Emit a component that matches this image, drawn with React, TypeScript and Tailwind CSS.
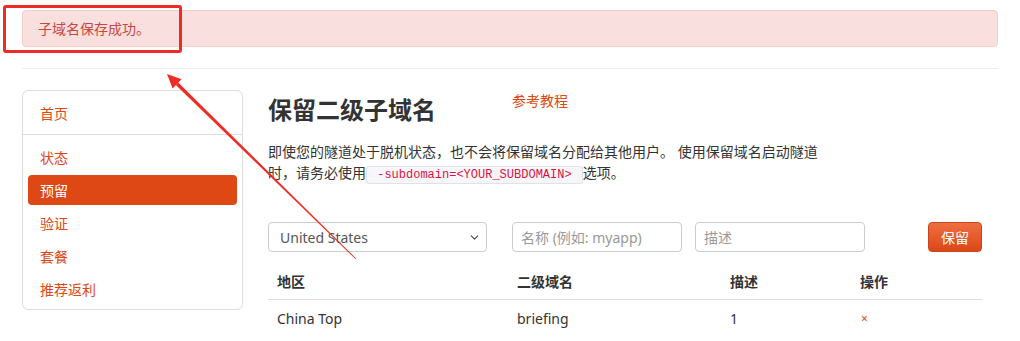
import React from "react";
import { ChevronDown } from "lucide-react";

const font = { fontFamily: '"Noto Sans", "Noto Sans CJK SC", sans-serif' };

function Sidebar() {
  const items = ["状态", "预留", "验证", "套餐", "推荐返利"];
  return (
    <div className="w-[221px] shrink-0 self-start rounded-[6px] border border-[#dddddd] pt-[7px] pb-[5px]">
      <div className="px-[5px]">
        <div className="flex h-[30px] items-center pl-[12px] text-[14px] text-[#dd4814]">首页</div>
      </div>
      <div className="mt-[6px] mb-[7px] h-px bg-[#dddddd]" />
      <div className="flex flex-col gap-[3px] px-[5px]">
        {items.map((t) => (
          <div
            key={t}
            className={
              t === "预留"
                ? "flex h-[30px] items-center rounded-[4px] bg-[#dd4814] pl-[12px] text-[14px] text-white"
                : "flex h-[30px] items-center pl-[12px] text-[14px] text-[#dd4814]"
            }
          >
            {t}
          </div>
        ))}
      </div>
    </div>
  );
}

function Main() {
  return (
    <div className="flex w-[714px] flex-col">
      <div className="flex items-start">
        <h1 className="w-[244px] text-[24px] font-bold leading-[40px] text-[#333333]">保留二级子域名</h1>
        <a className="mt-[1px] text-[14px] leading-[20px] text-[#dd4814]">参考教程</a>
      </div>
      <p className="mt-[11px] w-[556px] text-[14px] leading-[21px] text-[#333333]">
        即使您的隧道处于脱机状态，也不会将保留域名分配给其他用户。 使用保留域名启动隧道时，请务必使用
        <code
          className="rounded-[3px] border border-[#e1e1e8] bg-[#f7f7f9] px-[3px] py-[1px] text-[12px] text-[#dd1144] whitespace-pre"
          style={{ fontFamily: '"Liberation Mono", monospace' }}
        >
          {" -subdomain=<YOUR_SUBDOMAIN> "}
        </code>
        选项。
      </p>
      <div className="mt-[36px] flex h-[30px] items-stretch">
        <div className="flex w-[219px] items-center justify-between rounded-[4px] border border-[#cccccc] bg-white pl-[11px] pr-[5px] text-[14px] text-[#555555]">
          <span>United States</span>
          <ChevronDown size={13} strokeWidth={2} color="#444" />
        </div>
        <div className="ml-[25px] flex w-[170px] items-center rounded-[4px] border border-[#cccccc] pl-[8px] text-[14px] text-[#999999]">
          名称 (例如: myapp)
        </div>
        <div className="ml-[13px] flex w-[170px] items-center rounded-[4px] border border-[#cccccc] pl-[8px] text-[14px] text-[#999999]">
          描述
        </div>
        <div className="ml-auto flex w-[54px] items-center justify-center rounded-[4px] border border-[#c9441a] bg-gradient-to-b from-[#ee6e3f] to-[#dc4716] text-[14px] text-white">
          保留
        </div>
      </div>
      <div className="mt-[11px] text-[14px] text-[#333333]">
        <div className="flex h-[37px] items-center border-b border-[#dddddd] font-bold">
          <div className="w-[240px] pl-[9px]">地区</div>
          <div className="w-[213px] pl-[9px]">二级域名</div>
          <div className="w-[130px] pl-[9px]">描述</div>
          <div className="pl-[9px]">操作</div>
        </div>
        <div className="flex h-[37px] items-center">
          <div className="w-[240px] pl-[9px]">China Top</div>
          <div className="w-[213px] pl-[9px]">briefing</div>
          <div className="w-[130px] pl-[9px]">1</div>
          <div className="pl-[10px] text-[12px] text-[#dd4814]">×</div>
        </div>
      </div>
    </div>
  );
}

export default function App() {
  return (
    <div className="relative h-[341px] w-[1020px] overflow-hidden bg-white" style={font}>
      <div className="px-[22px] pt-[10px]">
        <div className="flex h-[37px] items-center rounded-[4px] border border-[#f5cdcb] bg-[#f9dfdd] pl-[15px] text-[14px] text-[#c9463d]">
          子域名保存成功。
        </div>
        <div className="mt-[21px] h-px bg-[#eeeeee]" />
        <div className="mt-[21px] flex gap-[25px]">
          <Sidebar />
          <Main />
        </div>
      </div>

      <div className="pointer-events-none absolute left-[3px] top-[5px] h-[48px] w-[179px] rounded-[3px] border-[3px] border-[#ee2b24]" />
      <svg className="pointer-events-none absolute left-0 top-0" width="1020" height="341" viewBox="0 0 1020 341">
        <polygon points="178.2,82.6 175.8,85.0 355.7,259.3 356.3,258.7" fill="#ee2b24" />
        <polygon points="167,74 181.5,79.3 172.6,88.4" fill="#ee2b24" />
      </svg>
    </div>
  );
}
